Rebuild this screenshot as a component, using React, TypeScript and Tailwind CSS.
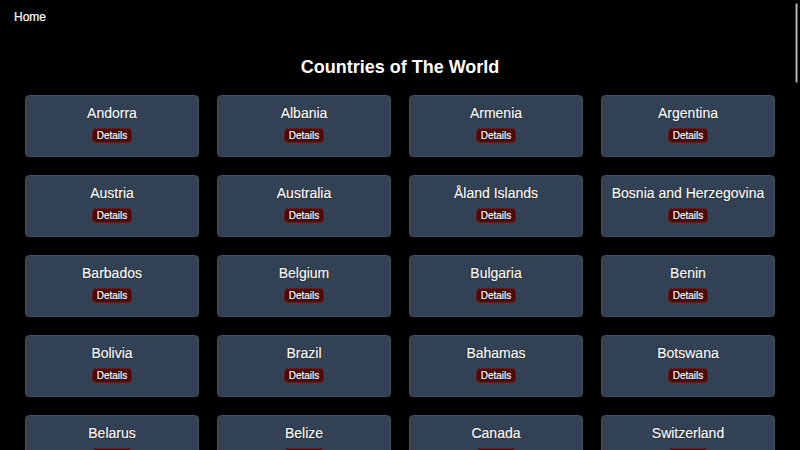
import React from "react";

const countries = [
  "Andorra", "Albania", "Armenia", "Argentina",
  "Austria", "Australia", "Åland Islands", "Bosnia and Herzegovina",
  "Barbados", "Belgium", "Bulgaria", "Benin",
  "Bolivia", "Brazil", "Bahamas", "Botswana",
  "Belarus", "Belize", "Canada", "Switzerland",
];

export default function App() {
  return (
    <div className="relative h-[450px] w-[800px] overflow-hidden bg-black text-white font-['Liberation_Sans',Arial,sans-serif] [text-shadow:0_0_1px_#000,0_0_1px_#000]">
      <div className="px-[14px] pt-[9px] text-[12px] font-medium leading-4 [-webkit-text-stroke:0.2px_#fff]">Home</div>
      <h1 className="mt-[28px] text-center text-[18px] font-bold leading-7">Countries of The World</h1>
      <div className="mx-[25px] mt-[14px] grid grid-cols-4 gap-[18px]">
        {countries.map((c) => (
          <div
            key={c}
            className="flex h-[62px] flex-col items-center rounded-[4px] border border-[#3f4e63] bg-[#334155] pt-[7px]"
          >
            <div className="text-[14px] leading-5 [-webkit-text-stroke:0.2px_#fff]">{c}</div>
            <div className="mt-[5px] rounded-[4px] border border-[#6b1a1a] bg-[#4a0b0b] px-[4px] text-[10px] leading-[13px] [-webkit-text-stroke:0.2px_#fff]">
              Details
            </div>
          </div>
        ))}
      </div>
      <div className="absolute right-[2px] top-[3px] h-[80px] w-[3px] rounded-full border border-[#555] bg-[#bbb]" />
    </div>
  );
}
